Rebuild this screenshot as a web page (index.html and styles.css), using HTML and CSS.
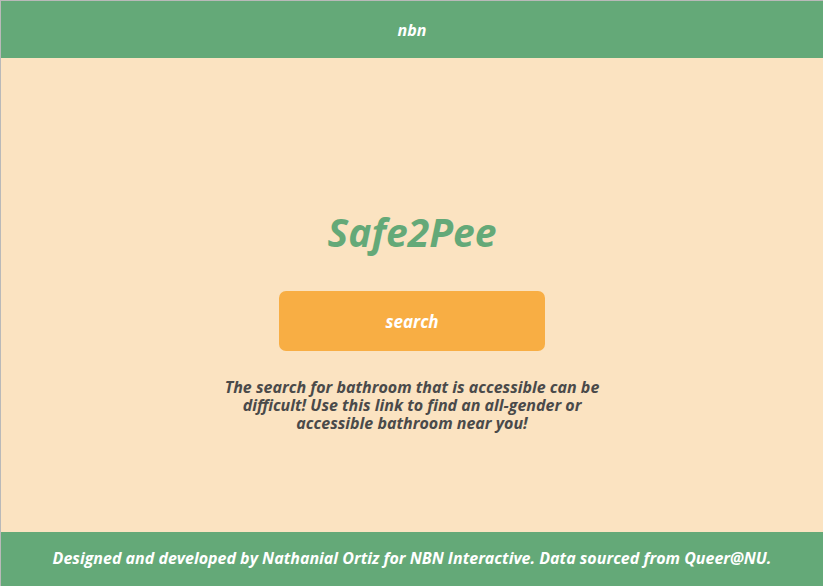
FILE: index.html
```html
<!DOCTYPE html>
<html>
<head>
<meta charset="utf-8">
<link rel="stylesheet" href="styles.css">
</head>
<body>
<div class="page">
  <header class="topbar"><span class="brand">nbn</span></header>
  <main class="main">
    <h1 class="title">Safe2Pee</h1>
    <a class="search-btn" href="#">search</a>
    <p class="blurb">The search for bathroom that is accessible can be difficult! Use this link to find an all-gender or accessible bathroom near you!</p>
  </main>
  <footer class="footer"><span class="credits">Designed and developed by Nathanial Ortiz for NBN Interactive. Data sourced from Queer@NU.</span></footer>
</div>
</body>
</html>
```
FILE: styles.css
```css
html, body { margin: 0; padding: 0; }
body {
  font-family: "Open Sans", sans-serif;
  font-weight: 700;
  font-style: italic;
  background: #fbe3c1;
}
.page {
  height: 586px;
  display: flex;
  flex-direction: column;
  border-top: 1px solid #b9b9b9;
  border-left: 1px solid #b9b9b9;
  box-sizing: border-box;
}
.topbar {
  height: 57px;
  background: #64a978;
  display: flex;
  align-items: center;
  justify-content: center;
  flex: none;
}
.brand { color: #fff; font-size: 16px; }
.main {
  flex: 1;
  display: flex;
  flex-direction: column;
  align-items: center;
  justify-content: center;
  padding-top: 54px;
}
.title {
  margin: 0;
  color: #64a978;
  font-size: 39px;
  line-height: 1;
}
.search-btn {
  margin-top: 40px;
  width: 266px;
  height: 60px;
  background: #f8ae44;
  border-radius: 7px;
  display: flex;
  align-items: center;
  justify-content: center;
  color: #fff;
  font-size: 17px;
  text-decoration: none;
}
.blurb {
  margin: 27px 0 0;
  width: 400px;
  text-align: center;
  color: #4a4a4a;
  font-size: 16px;
  line-height: 18px;
}
.footer {
  height: 54px;
  background: #64a978;
  flex: none;
  display: flex;
  align-items: center;
  justify-content: center;
}
.credits { color: #fff; font-size: 16px; position: relative; top: -1px; }
```
